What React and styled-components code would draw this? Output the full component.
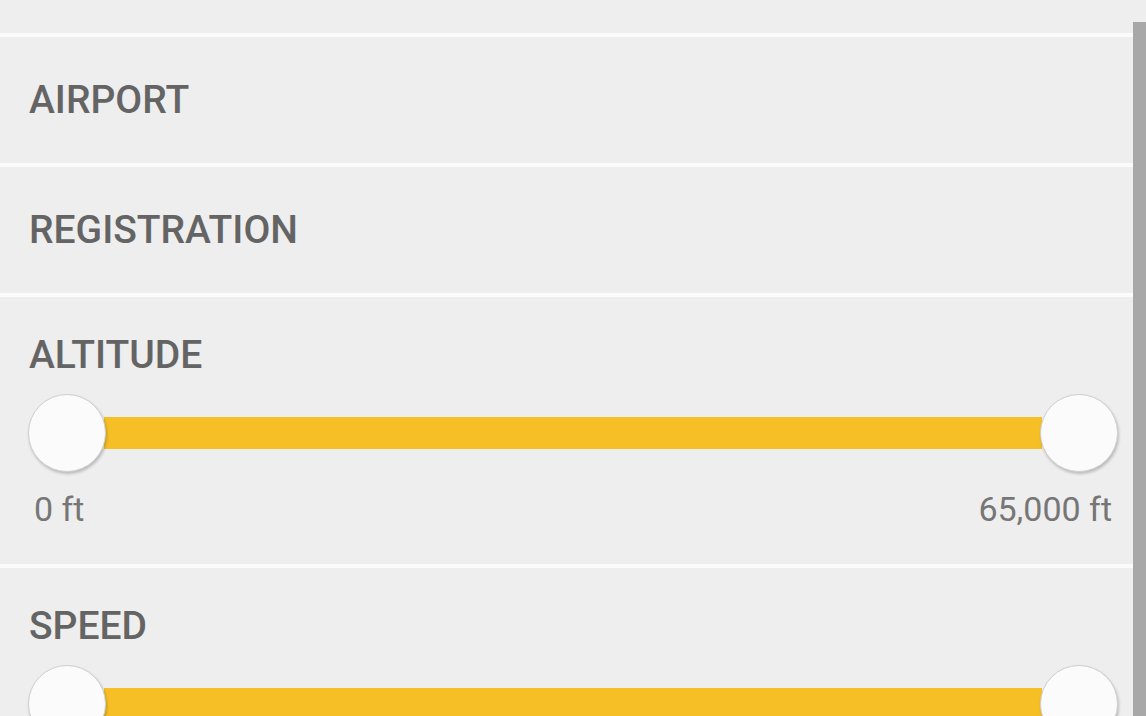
import React from 'react';
import styled, { createGlobalStyle } from 'styled-components';

const GlobalStyle = createGlobalStyle`
  html, body {
    margin: 0;
    padding: 0;
    height: 100%;
    overflow: hidden;
    background: #eeeeee;
  }
  #root {
    height: 100%;
  }
`;

const Screen = styled.div`
  display: flex;
  height: 716px;
  background: #eeeeee;
  font-family: Roboto, 'Noto Sans', sans-serif;
  overflow: hidden;
`;

const FilterList = styled.div`
  flex: 1;
  display: flex;
  flex-direction: column;
`;

const ScrollBar = styled.div`
  width: 13px;
  margin-top: 22px;
  background: #a8a8a8;
`;

const TopStub = styled.div`
  height: 33px;
  flex-shrink: 0;
`;

const Section = styled.div`
  flex-shrink: 0;
  border-top: 4px solid #fbfbfb;
  padding: ${props => (props.slider ? '38px 15px 38px 28px' : '0 0 0 29px')};
  height: ${props => (props.slider ? 'auto' : '126px')};
  display: flex;
  flex-direction: column;
  justify-content: center;
`;

const Title = styled.div`
  font-size: 39px;
  line-height: 40px;
  font-weight: 500;
  color: #646464;
  padding-left: ${props => (props.slider ? '1px' : '0')};
`;

const Slider = styled.div`
  display: flex;
  align-items: center;
  height: 78px;
  margin-top: 19px;
`;

const Thumb = styled.div`
  width: 78px;
  height: 78px;
  flex-shrink: 0;
  box-sizing: border-box;
  border-radius: 50%;
  background: #fbfbfb;
  border: 1px solid #d0d0d0;
  box-shadow: 1px 2px 3px rgba(0, 0, 0, 0.22);
  position: relative;
  z-index: 1;
`;

const Track = styled.div`
  flex: 1;
  height: 32px;
  margin: 0 -2px;
  background: #f6bf26;
`;

const Limits = styled.div`
  display: flex;
  justify-content: space-between;
  margin-top: 20px;
  padding: 0 6px 0 6px;
  font-size: 34px;
  line-height: 34px;
  color: #767676;
`;

function RangeFilter({ title, min, max }) {
  return (
    <Section slider>
      <Title slider>{title}</Title>
      <Slider>
        <Thumb />
        <Track />
        <Thumb />
      </Slider>
      <Limits>
        <span>{min}</span>
        <span>{max}</span>
      </Limits>
    </Section>
  );
}

export default function App() {
  return (
    <Screen>
      <GlobalStyle />
      <FilterList>
        <TopStub />
        <Section>
          <Title>AIRPORT</Title>
        </Section>
        <Section>
          <Title>REGISTRATION</Title>
        </Section>
        <RangeFilter title="ALTITUDE" min="0 ft" max="65,000 ft" />
        <RangeFilter title="SPEED" min="0 kts" max="2,000 kts" />
      </FilterList>
      <ScrollBar />
    </Screen>
  );
}
